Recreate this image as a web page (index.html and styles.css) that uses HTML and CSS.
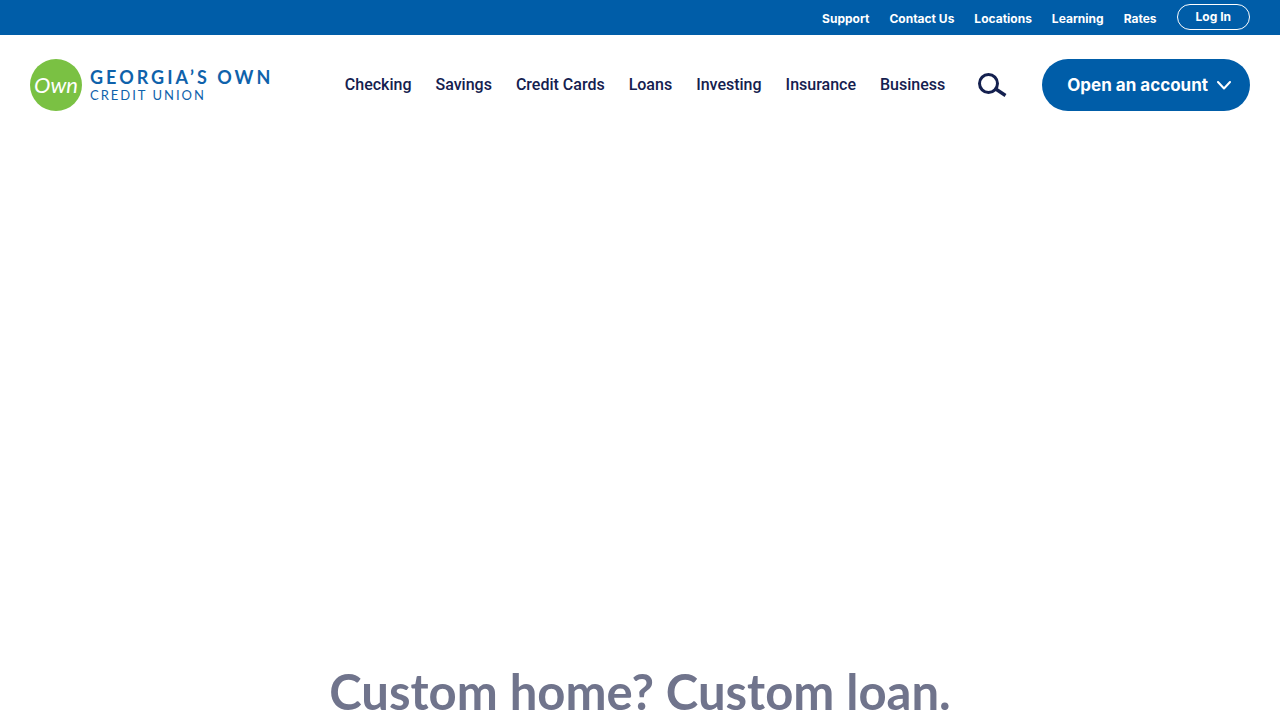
FILE: index.html
```html
<!DOCTYPE html>
<html lang="en">
<head>
<meta charset="utf-8">
<meta name="viewport" content="width=device-width, initial-scale=1">
<title>Georgia's Own Credit Union</title>
<link rel="stylesheet" href="styles.css">
</head>
<body>
<nav class="utility" aria-label="Utility">
  <a href="#">Support</a>
  <a href="#">Contact Us</a>
  <a href="#">Locations</a>
  <a href="#">Learning</a>
  <a href="#">Rates</a>
  <button type="button" class="login">Log In</button>
</nav>
<header class="header">
  <a class="logo" href="#">
    <span class="logo-badge">Own</span>
    <span class="logo-words">
      <span class="logo-name">GEORGIA’S OWN</span>
      <span class="logo-sub">CREDIT UNION</span>
    </span>
  </a>
  <div class="header-right">
    <nav class="main-nav" aria-label="Main">
      <a href="#">Checking</a>
      <a href="#">Savings</a>
      <a href="#">Credit Cards</a>
      <a href="#">Loans</a>
      <a href="#">Investing</a>
      <a href="#">Insurance</a>
      <a href="#">Business</a>
    </nav>
    <button type="button" class="search" aria-label="Search">
      <svg width="30" height="26" viewBox="0 0 30 26" fill="none" stroke="#14204f">
        <circle cx="11.5" cy="11.5" r="9" stroke-width="3"/>
        <path d="M18 16.5 28.5 23.5" stroke-width="3.4"/>
      </svg>
    </button>
    <button type="button" class="open-account">
      <span>Open an account</span>
      <svg width="14" height="9" viewBox="0 0 14 9" fill="none" stroke="#fff" stroke-width="2" stroke-linecap="round" stroke-linejoin="round">
        <path d="M1 1 7 7.5 13 1"/>
      </svg>
    </button>
  </div>
</header>
<main class="hero">
  <h1>Custom home? Custom loan.</h1>
</main>
</body>
</html>
```
FILE: styles.css
```css
* {
  box-sizing: border-box;
}

body {
  margin: 0;
  min-height: 100vh;
  display: flex;
  flex-direction: column;
  background: #fff;
  color: #14204f;
  font-family: Roboto, "Liberation Sans", sans-serif;
}

a {
  color: inherit;
  text-decoration: none;
}

button {
  padding: 0;
  border: 0;
  background: none;
  color: inherit;
  font: inherit;
  cursor: pointer;
}

.utility {
  display: flex;
  justify-content: flex-end;
  align-items: flex-start;
  gap: 20px;
  padding: 4px 30px 1px;
  background: #005da8;
  color: #fff;
  font-family: Inter, Roboto, sans-serif;
  font-size: 12px;
  font-weight: 700;
  line-height: 30px;
}

.login {
  padding: 0 18px;
  border: 1px solid #fff;
  border-radius: 13px;
  line-height: 24px;
}

.header {
  display: flex;
  justify-content: space-between;
  align-items: center;
  padding: 24px 30px;
}

.logo {
  display: flex;
  align-items: center;
  gap: 8px;
  color: #0f62ab;
  font-family: Lato, sans-serif;
  white-space: nowrap;
}

.logo-badge {
  width: 52px;
  height: 52px;
  border-radius: 50%;
  background: #7ac143;
  color: #fff;
  font-size: 22px;
  font-style: italic;
  line-height: 52px;
  text-align: center;
}

.logo-words {
  display: flex;
  flex-direction: column;
}

.logo-name {
  font-size: 18px;
  font-weight: 700;
  letter-spacing: 3px;
  line-height: 20px;
}

.logo-sub {
  font-size: 13px;
  letter-spacing: 2px;
  line-height: 16px;
}

.header-right {
  display: flex;
  align-items: center;
}

.main-nav {
  display: flex;
  gap: 24px;
  font-size: 16px;
  font-weight: 500;
  line-height: 24px;
  white-space: nowrap;
}

.search {
  margin: 0 35px 0 32px;
}

.search svg {
  display: block;
}

.open-account {
  display: flex;
  align-items: center;
  gap: 9px;
  padding: 14px 19px 14px 25px;
  border-radius: 26px;
  background: #005da8;
  color: #fff;
  font-family: Inter, Roboto, sans-serif;
  font-size: 17px;
  font-weight: 700;
  line-height: 24px;
  white-space: nowrap;
}

.hero {
  display: flex;
  flex: 1;
  justify-content: center;
  align-items: flex-end;
  padding-bottom: 1px;
}

.hero h1 {
  margin: 0;
  color: #70748c;
  font-family: Lato, sans-serif;
  font-size: 49px;
  font-weight: 700;
  line-height: 56px;
  text-align: center;
}
```
